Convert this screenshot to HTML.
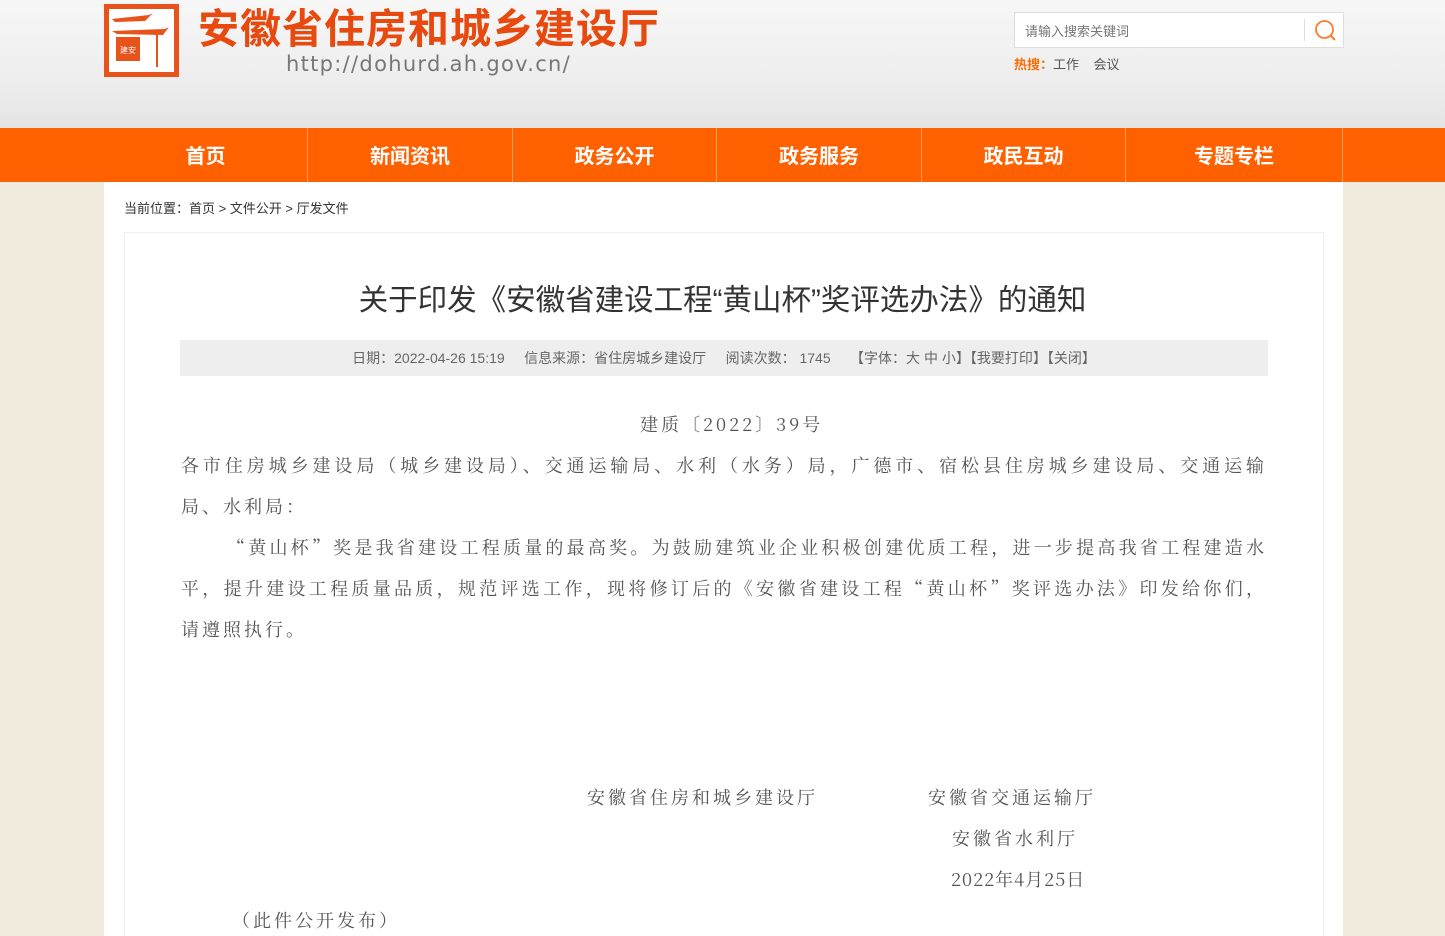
<!DOCTYPE html>
<html><head><meta charset="utf-8">
<style>
*{margin:0;padding:0;box-sizing:border-box}
html,body{width:1445px;height:936px;overflow:hidden}
body{background:#f1ebdd;font-family:"Liberation Sans","Noto Sans CJK SC",sans-serif;position:relative}
.hdr{position:absolute;left:0;top:0;width:1445px;height:128px;background:linear-gradient(#f7f7f7,#eeeeee 60%,#e4e4e4)}
.logo{position:absolute;left:104px;top:4px;width:75px;height:73px;border:5px solid #e8531c;background:#fff}
.t1{position:absolute;left:198px;top:-5px;font-size:41px;font-weight:bold;color:#e8490f;letter-spacing:1px;white-space:nowrap}
.url{position:absolute;left:286px;top:52px;font-size:21px;color:#777;letter-spacing:1.3px;font-family:"DejaVu Sans",sans-serif}
.search{position:absolute;left:1014px;top:12px;width:330px;height:36px;border:1px solid #ddd;background:#fff}
.search span{position:absolute;left:10px;top:8px;font-size:13px;color:#777}
.search i{position:absolute;left:289px;top:6px;width:1px;height:22px;background:#ddd}
.hot{position:absolute;left:1014px;top:54px;font-size:13px;color:#555}
.hot b{color:#ff6a00}
.nav{position:absolute;left:0;top:128px;width:1445px;height:54px;background:#ff6000}
.nav div{position:absolute;top:0;height:54px;line-height:58px;text-align:center;color:#fff;font-size:20px;font-weight:bold;border-right:1px solid #ff9a5a}
.main{position:absolute;left:104px;top:182px;width:1239px;height:754px;background:#fff;overflow:hidden}
.crumb{position:absolute;left:20px;top:16px;font-size:13px;color:#333}
.box{position:absolute;left:20px;top:50px;width:1200px;height:720px;border:1px solid #eee}
.title{position:absolute;left:0;width:1445px;top:277px;text-align:center;font-size:29.5px;color:#333}
.meta{position:absolute;left:180px;top:340px;width:1088px;height:36px;background:#eee;text-align:center;line-height:36px;font-size:14px;color:#666}
.body{position:absolute;left:181px;width:1086px;font-family:"Noto Serif CJK SC","Liberation Serif",serif;font-size:18px;color:#555;letter-spacing:3px}
.j{text-align:justify;text-align-last:justify;height:41px;line-height:41px;white-space:nowrap}
.c{position:absolute;font-family:"Noto Serif CJK SC","Liberation Serif",serif;font-size:18px;color:#555;letter-spacing:3px;white-space:nowrap}
</style></head><body>
<div class="hdr">
<div class="logo">
<svg width="65" height="63" viewBox="0 0 65 63">
<path d="M3 10 L40 6 L44 4 L36 12 L6 13Z" fill="#e8531c"/>
<path d="M3 22 L56 20 L60 18 L54 26 L8 25Z" fill="#e8531c"/>
<rect x="47" y="24" width="2" height="34" fill="#e8531c"/>
<rect x="7" y="28" width="24" height="24" fill="#e8531c"/>
<text x="19" y="44" font-size="8" fill="#fff" text-anchor="middle">建安</text>
</svg></div>
<div class="t1">安徽省住房和城乡建设厅</div>
<div class="url">http://dohurd.ah.gov.cn/</div>
<div class="search"><span>请输入搜索关键词</span><i></i>
<svg style="position:absolute;left:299px;top:6px" width="24" height="24" viewBox="0 0 24 24"><circle cx="10.5" cy="10.5" r="8.5" fill="none" stroke="#ff7a2a" stroke-width="1.8"/><path d="M17 17 L21 21" stroke="#ff7a2a" stroke-width="2"/></svg></div>
<div class="hot"><b>热搜：</b>工作 &nbsp;&nbsp; 会议</div>
</div>
<div class="nav">
<div style="left:104px;width:204px">首页</div>
<div style="left:308px;width:205px">新闻资讯</div>
<div style="left:513px;width:204px">政务公开</div>
<div style="left:717px;width:205px">政务服务</div>
<div style="left:922px;width:204px">政民互动</div>
<div style="left:1126px;width:217px">专题专栏</div>
</div>
<div class="main">
<div class="crumb">当前位置：首页 &gt; 文件公开 &gt; 厅发文件</div>
<div class="box"></div>
</div>
<div class="title">关于印发《安徽省建设工程“黄山杯”奖评选办法》的通知</div>
<div class="meta">日期：2022-04-26 15:19 &nbsp;&nbsp;&nbsp; 信息来源：省住房城乡建设厅 &nbsp;&nbsp;&nbsp; 阅读次数： 1745 &nbsp;&nbsp;&nbsp;&nbsp;【字体：大 中 小】【我要打印】【关闭】</div>
<div class="c" style="left:640px;top:411px">建质〔2022〕39号</div>
<div class="body" style="top:445px">
<div class="j">各市住房城乡建设局（城乡建设局）、交通运输局、水利（水务）局，广德市、宿松县住房城乡建设局、交通运输</div>
<div style="height:41px;line-height:41px">局、水利局：</div>
<div class="j" style="padding-left:46px">“黄山杯”奖是我省建设工程质量的最高奖。为鼓励建筑业企业积极创建优质工程，进一步提高我省工程建造水</div>
<div class="j">平，提升建设工程质量品质，规范评选工作，现将修订后的《安徽省建设工程“黄山杯”奖评选办法》印发给你们，</div>
<div style="height:41px;line-height:41px">请遵照执行。</div>
</div>
<div class="c" style="left:587px;top:784px">安徽省住房和城乡建设厅</div>
<div class="c" style="left:928px;top:784px">安徽省交通运输厅</div>
<div class="c" style="left:952px;top:825px">安徽省水利厅</div>
<div class="c" style="left:951px;top:866px;letter-spacing:1px">2022年4月25日</div>
<div class="c" style="left:232px;top:907px">（此件公开发布）</div>
</body></html>
